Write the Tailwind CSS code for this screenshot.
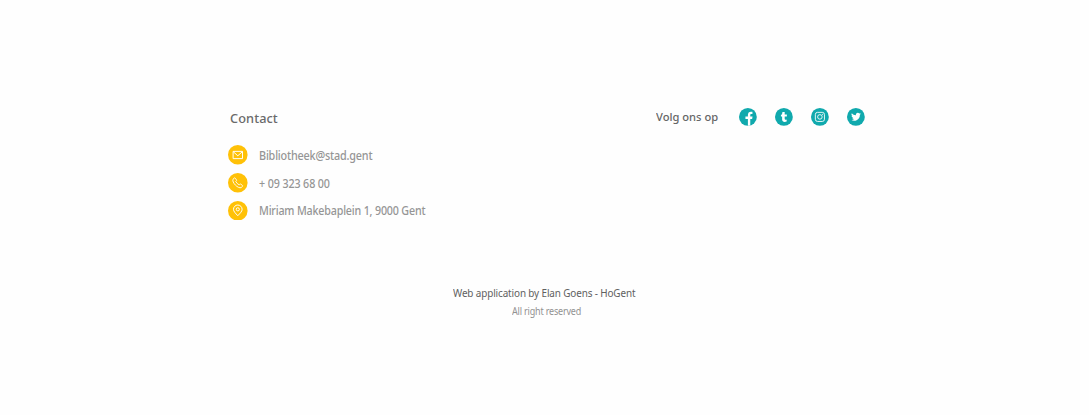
<!DOCTYPE html>
<html lang="nl">
<head>
<meta charset="utf-8">
<title>Contact</title>
<script src="https://cdn.jsdelivr.net/npm/@tailwindcss/browser@4"></script>
</head>
<body class="bg-[#fefefe] font-['Noto_Sans',sans-serif] h-[415px] overflow-hidden">
<footer class="pt-[107px]">
  <div class="ml-[228px] w-[637.2px] flex justify-between items-start h-[114px]">
    <section>
      <h2 class="ml-[1.6px] mt-[1.4px] h-5 leading-5 text-[13px] font-medium text-[#6a6a6a] tracking-[0.1px] whitespace-nowrap origin-left scale-x-[.98]">Contact</h2>
      <ul class="mt-[16.9px] flex flex-col gap-[7.6px] text-[12px] leading-5 text-[#959595] font-medium whitespace-nowrap">
        <li class="flex items-center h-5 gap-[11px]">
          <svg class="size-[19.6px] shrink-0" viewBox="0 0 20 20"><circle cx="10" cy="10" r="10" fill="#ffc107"/><g fill="none" stroke="#fff" stroke-width="1"><path d="M5.2 6.5h9.6v7.4H5.2z"/><path d="M5.4 6.9L10 11l4.6-4.1"/></g></svg>
          <span class="pt-[2px] tracking-[-0.2px] origin-left scale-x-[.9]">Bibliotheek@stad.gent</span>
        </li>
        <li class="flex items-center h-5 gap-[11px]">
          <svg class="size-[19.6px] shrink-0" viewBox="0 0 20 20"><circle cx="10" cy="10" r="10" fill="#ffc107"/><path d="M5.1 6.4L6.5 5.1Q7 4.8 7.4 5.3L8.7 7.1Q9 7.6 8.5 8L7.9 8.6Q9.2 11 11.4 12.1L12 11.5Q12.5 11 13 11.4L14.7 12.6Q15.2 13 14.8 13.5L13.6 14.9C12 15.6 9.4 14.3 7.5 12.3C5.6 10.3 4.4 8 5.1 6.4Z" fill="none" stroke="#fff" stroke-width=".9"/></svg>
          <span class="pt-[2px] tracking-[-0.14px] origin-left scale-x-[.895]">+ 09 323 68 00</span>
        </li>
        <li class="flex items-center h-5 gap-[11px]">
          <svg class="size-[19.6px] shrink-0" viewBox="0 0 20 20"><circle cx="10" cy="10" r="10" fill="#ffc107"/><g fill="none" stroke="#fff" stroke-width="1"><path d="M10 15C7.5 12.4 5.6 10.6 5.6 8.5a4.4 4.4 0 0 1 8.8 0C14.4 10.6 12.5 12.4 10 15Z"/><circle cx="10" cy="8.5" r="1.6"/></g></svg>
          <span class="pt-[2px] tracking-[-0.2px] origin-left scale-x-[.892]">Miriam Makebaplein 1, 9000 Gent</span>
        </li>
      </ul>
    </section>
    <section class="flex items-center h-5 mt-[0.4px]">
      <span class="w-[83.4px] text-[11.5px] leading-5 font-medium text-[#666] whitespace-nowrap origin-left scale-x-[.97]">Volg ons op</span>
      <div class="flex gap-[18.2px]">
        <svg class="size-[17.8px]" viewBox="0 0 18 18"><circle cx="9" cy="9" r="9" fill="#10a9ad"/><path d="M9 18V11.2H6.5V8.7H9V7.1C9 5 10.1 3.8 12.1 3.8l1.5.1V6h-1.1c-.8 0-1.1.4-1.1 1.1v1.6h2.3l-.4 2.5h-1.9v6.6Z" fill="#fff"/></svg>
        <svg class="size-[17.8px]" viewBox="0 0 18 18"><circle cx="9" cy="9" r="9" fill="#10a9ad"/><path d="M7.5 4H9.8V6.6H12V8.7H9.8v2.2c0 1 .8 1.2 2 .7v2c-2.3 1-4.6.4-4.6-1.9V8.7H6V7.1c1-.4 1.4-1.4 1.5-3.1Z" fill="#fff"/></svg>
        <svg class="size-[17.8px]" viewBox="0 0 18 18"><circle cx="9" cy="9" r="9" fill="#10a9ad"/><g fill="none" stroke="#fff" stroke-width=".9"><rect x="4.4" y="4.4" width="9.2" height="9.2" rx="2.2"/><circle cx="9" cy="9" r="2.3"/></g><circle cx="11.7" cy="6.3" r=".6" fill="#fff"/></svg>
        <svg class="size-[17.8px]" viewBox="0 0 18 18"><circle cx="9" cy="9" r="9" fill="#10a9ad"/><path transform="translate(4.1 3.9) scale(.415)" d="M23.9 4.6a10 10 0 0 1-2.8.8 4.9 4.9 0 0 0 2.2-2.7 10 10 0 0 1-3.1 1.2 4.9 4.9 0 0 0-8.4 4.5A14 14 0 0 1 1.7 3.2a4.9 4.9 0 0 0 1.5 6.5 4.9 4.9 0 0 1-2.2-.6 4.9 4.9 0 0 0 3.9 4.9 5 5 0 0 1-2.2.1 4.9 4.9 0 0 0 4.6 3.4A9.9 9.9 0 0 1 0 19.5a14 14 0 0 0 21.5-12.4 10 10 0 0 0 2.4-2.5Z" fill="#fff"/></svg>
      </div>
    </section>
  </div>
  <div class="pt-[62px] whitespace-nowrap">
    <p class="ml-[452.7px] h-[19px] leading-[19px] text-[11px] text-[#606060] tracking-[-0.13px] origin-left scale-x-[.9]">Web application by Elan Goens - HoGent</p>
    <p class="ml-[511.5px] h-[18px] leading-[18px] text-[10px] text-[#929292] tracking-[-0.2px] origin-left scale-x-[.9]">All right reserved</p>
  </div>
</footer>
</body>
</html>
